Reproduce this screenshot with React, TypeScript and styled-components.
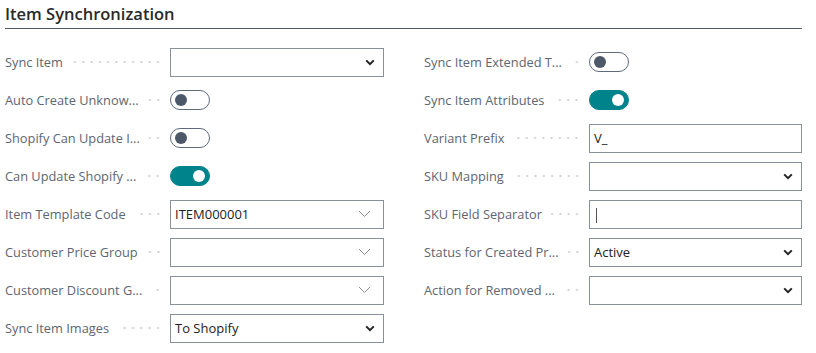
import React from "react";
import styled, { createGlobalStyle } from "styled-components";

const Global = createGlobalStyle`
  html, body { margin: 0; padding: 0; background: #ffffff; }
  body { font-family: "Open Sans", "Noto Sans", sans-serif; }
`;

const Page = styled.div`
  width: 816px;
  height: 353px;
  box-sizing: border-box;
  padding: 0 14px 0 5px;
  overflow: hidden;
`;

const Title = styled.h2`
  margin: 0;
  padding-top: 3px;
  height: 25px;
  font-size: 16.5px;
  font-weight: 600;
  color: #2a2a2a;
  line-height: 22px;
  border-bottom: 1px solid #505a66;
`;

const Columns = styled.div`
  display: grid;
  grid-template-columns: 379px 378px;
  column-gap: 40px;
  padding-top: 14px;
`;

const Column = styled.div`
  display: flex;
  flex-direction: column;
`;

const Row = styled.div`
  display: flex;
  align-items: center;
  height: 38px;
`;

const LabelArea = styled.div`
  display: flex;
  align-items: center;
  width: 157px;
  flex: none;
  margin-right: 8px;
`;

const LabelText = styled.span`
  font-size: 12.8px;
  color: #5d6672;
  white-space: nowrap;
  flex: none;
`;

const Dots = styled.span`
  flex: 1 1 auto;
  min-width: 0;
  height: 4px;
  margin-left: 9px;
  background-image: radial-gradient(circle, #cdd0d4 0.9px, transparent 1.2px);
  background-size: 8.3px 4px;
  background-position: right center;
  background-repeat: repeat-x;
`;

const Box = styled.div`
  box-sizing: border-box;
  width: 214px;
  height: 29px;
  border: 1px solid #8a9099;
  display: flex;
  align-items: center;
  padding: 0 8px 0 4px;
  font-size: 13px;
  color: #212121;
  background: #fff;
`;

const Value = styled.span`
  flex: 1;
  white-space: nowrap;
`;

const Caret = styled.span`
  display: inline-block;
  vertical-align: middle;
  width: 1px;
  height: 15px;
  background: #555;
  margin-left: 2px;
`;

const Track = styled.div<{ $on: boolean }>`
  box-sizing: border-box;
  width: 40px;
  height: 20px;
  border-radius: 10px;
  border: 1px solid ${(p) => (p.$on ? "#00838a" : "#5f6b7a")};
  background: ${(p) => (p.$on ? "#00838a" : "#ffffff")};
  display: flex;
  align-items: center;
  justify-content: ${(p) => (p.$on ? "flex-end" : "flex-start")};
  padding: 0 4px;
`;

const Knob = styled.span<{ $on: boolean }>`
  width: 12px;
  height: 12px;
  border-radius: 50%;
  background: ${(p) => (p.$on ? "#ffffff" : "#4d5868")};
`;

const BoldChevron = () => (
  <svg width="10" height="7" viewBox="0 0 10 7">
    <path d="M1.2 1.4 L5 5.2 L8.8 1.4" fill="none" stroke="#222" strokeWidth="2" />
  </svg>
);

const ThinChevron = () => (
  <svg width="13" height="8" viewBox="0 0 13 8" style={{ marginRight: 4 }}>
    <path d="M1 1 L6.5 6.5 L12 1" fill="none" stroke="#8a8f96" strokeWidth="1" />
  </svg>
);

type Field =
  | { kind: "select"; value?: string }
  | { kind: "lookup"; value?: string }
  | { kind: "text"; value?: string; caret?: boolean }
  | { kind: "toggle"; on: boolean };

type Item = { label: string; field: Field };

const left: Item[] = [
  { label: "Sync Item", field: { kind: "select" } },
  { label: "Auto Create Unknow...", field: { kind: "toggle", on: false } },
  { label: "Shopify Can Update I...", field: { kind: "toggle", on: false } },
  { label: "Can Update Shopify ...", field: { kind: "toggle", on: true } },
  { label: "Item Template Code", field: { kind: "lookup", value: "ITEM000001" } },
  { label: "Customer Price Group", field: { kind: "lookup" } },
  { label: "Customer Discount G...", field: { kind: "lookup" } },
  { label: "Sync Item Images", field: { kind: "select", value: "To Shopify" } },
];

const right: Item[] = [
  { label: "Sync Item Extended T...", field: { kind: "toggle", on: false } },
  { label: "Sync Item Attributes", field: { kind: "toggle", on: true } },
  { label: "Variant Prefix", field: { kind: "text", value: "V_" } },
  { label: "SKU Mapping", field: { kind: "select" } },
  { label: "SKU Field Separator", field: { kind: "text", caret: true } },
  { label: "Status for Created Pr...", field: { kind: "select", value: "Active" } },
  { label: "Action for Removed ...", field: { kind: "select" } },
];

const FieldView = ({ field }: { field: Field }) => {
  if (field.kind === "toggle") {
    return (
      <Track $on={field.on}>
        <Knob $on={field.on} />
      </Track>
    );
  }
  return (
    <Box>
      <Value>
        {field.value}
        {field.kind === "text" && field.caret ? <Caret /> : null}
      </Value>
      {field.kind === "select" && <BoldChevron />}
      {field.kind === "lookup" && <ThinChevron />}
    </Box>
  );
};

const ColumnView = ({ items }: { items: Item[] }) => (
  <Column>
    {items.map((it) => (
      <Row key={it.label}>
        <LabelArea>
          <LabelText>{it.label}</LabelText>
          <Dots />
        </LabelArea>
        <FieldView field={it.field} />
      </Row>
    ))}
  </Column>
);

export default function App() {
  return (
    <Page>
      <Global />
      <Title>Item Synchronization</Title>
      <Columns>
        <ColumnView items={left} />
        <ColumnView items={right} />
      </Columns>
    </Page>
  );
}
